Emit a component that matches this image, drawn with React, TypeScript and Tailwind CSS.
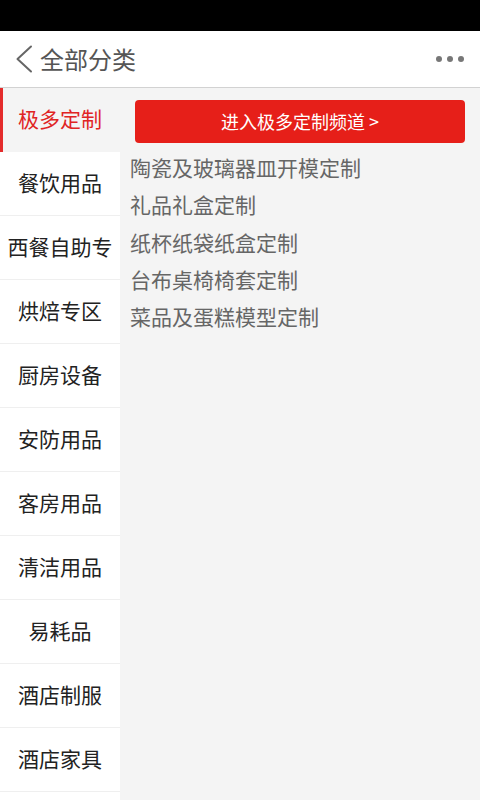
const categories = [
  "极多定制",
  "餐饮用品",
  "西餐自助专",
  "烘焙专区",
  "厨房设备",
  "安防用品",
  "客房用品",
  "清洁用品",
  "易耗品",
  "酒店制服",
  "酒店家具",
  "",
];

const subItems = [
  "陶瓷及玻璃器皿开模定制",
  "礼品礼盒定制",
  "纸杯纸袋纸盒定制",
  "台布桌椅椅套定制",
  "菜品及蛋糕模型定制",
];

export default function App() {
  return (
    <div
      className="flex h-[800px] w-[480px] flex-col overflow-hidden bg-white"
      style={{ fontFamily: '"Noto Sans CJK SC", "Noto Sans", sans-serif' }}
    >
      <div className="h-[31px] shrink-0 bg-black" />
      <header className="flex h-[57px] shrink-0 items-center justify-between border-b border-[#d2d2d2] bg-white pl-[15px] pr-[16px]">
        <div className="flex items-center gap-[7px]">
          <svg width="18" height="28" viewBox="0 0 18 28" fill="none">
            <polyline
              points="16,1.5 2.5,14 16,26.5"
              stroke="#666"
              strokeWidth="2"
              strokeLinecap="round"
              strokeLinejoin="round"
            />
          </svg>
          <span className="text-[24px] leading-none text-[#555]">全部分类</span>
        </div>
        <div className="flex items-center gap-[5px]">
          <span className="h-[6px] w-[6px] rounded-full bg-[#777]" />
          <span className="h-[6px] w-[6px] rounded-full bg-[#777]" />
          <span className="h-[6px] w-[6px] rounded-full bg-[#777]" />
        </div>
      </header>
      <div className="flex min-h-0 flex-1">
        <nav className="w-[120px] shrink-0 bg-white">
          {categories.map((c, i) =>
            i === 0 ? (
              <div
                key={i}
                className="flex h-[64px] items-center justify-center border-l-[3px] border-[#e42b2b] bg-[#f4f4f4] pb-[2px] pr-[3px] text-[21px] text-[#e02424]"
              >
                {c}
              </div>
            ) : (
              <div
                key={i}
                className="flex h-[64px] items-center justify-center overflow-hidden whitespace-nowrap border-b border-[#efefef] pb-[2px] text-[21px] text-[#222]"
              >
                {c}
              </div>
            )
          )}
        </nav>
        <main className="flex-1 bg-[#f4f4f4] pt-[12px]">
          <button className="mx-[15px] flex h-[43px] w-[330px] items-center justify-center rounded-[4px] bg-[#e61f19] text-[18px] text-white">
            进入极多定制频道 &gt;
          </button>
          <ul className="mt-[6px] pl-[10px]">
            {subItems.map((s) => (
              <li key={s} className="text-[21px] leading-[37.25px] text-[#666]">
                {s}
              </li>
            ))}
          </ul>
        </main>
      </div>
    </div>
  );
}
